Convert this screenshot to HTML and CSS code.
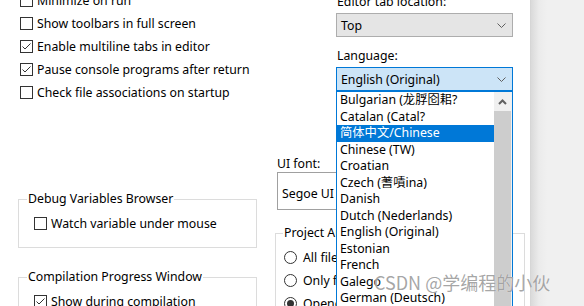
FILE: index.html
```html
<!DOCTYPE html>
<html lang="en">
<head>
    <meta charset="UTF-8">
    <title>Environment Options</title>
    <link rel="stylesheet" href="styles.css">
</head>
<body>
    <div class="screen">
        <div class="dialog">
            <div class="col-left">
                <div class="check-list">
                    <div class="check"><span class="box"></span>Minimize on run</div>
                    <div class="check"><span class="box"></span>Show toolbars in full screen</div>
                    <div class="check"><span class="box checked"></span>Enable multiline tabs in editor</div>
                    <div class="check"><span class="box checked"></span>Pause console programs after return</div>
                    <div class="check"><span class="box"></span>Check file associations on startup</div>
                </div>

                <fieldset class="group group-debug">
                    <legend>Debug Variables Browser</legend>
                    <div class="check"><span class="box"></span>Watch variable under mouse</div>
                </fieldset>

                <fieldset class="group group-compile">
                    <legend>Compilation Progress Window</legend>
                    <div class="check"><span class="box checked"></span>Show during compilation</div>
                </fieldset>
            </div>

            <div class="col-right">
                <div class="combo-block">
                    <div class="field-label">Editor tab location:</div>
                    <div class="combo">
                        <span>Top</span>
                        <svg class="chevron" width="9" height="5" viewBox="0 0 9 5"><polyline points="0.5,0.5 4.5,4.5 8.5,0.5" fill="none" stroke="#5f5f5f" stroke-width="1"/></svg>
                    </div>
                    <div class="field-label label-lang">Language:</div>
                    <div class="combo combo-open">
                        <span>English (Original)</span>
                        <svg class="chevron" width="9" height="5" viewBox="0 0 9 5"><polyline points="0.5,0.5 4.5,4.5 8.5,0.5" fill="none" stroke="#5f5f5f" stroke-width="1"/></svg>

                        <div class="droplist">
                            <ul class="items">
                                <li>Bulgarian (龙脬囵耜?</li>
                                <li>Catalan (Catal?</li>
                                <li class="selected">简体中文/Chinese</li>
                                <li>Chinese (TW)</li>
                                <li>Croatian</li>
                                <li>Czech (蓍嘖ina)</li>
                                <li>Danish</li>
                                <li>Dutch (Nederlands)</li>
                                <li>English (Original)</li>
                                <li>Estonian</li>
                                <li>French</li>
                                <li>Galego</li>
                                <li>German (Deutsch)</li>
                            </ul>
                            <div class="scrollbar">
                                <div class="scroll-up">
                                    <svg width="9" height="6" viewBox="0 0 9 6"><polyline points="1,5 4.5,1.5 8,5" fill="none" stroke="#606060" stroke-width="2"/></svg>
                                </div>
                                <div class="scroll-thumb"></div>
                            </div>
                        </div>
                    </div>
                </div>

                <div class="field-label label-font">UI font:</div>
                <div class="font-box">Segoe UI</div>

                <fieldset class="group group-project">
                    <legend>Project Auto Open</legend>
                    <div class="radio"><span class="dot"></span>All files</div>
                    <div class="radio"><span class="dot"></span>Only first</div>
                    <div class="radio"><span class="dot on"></span>Opened files</div>
                </fieldset>
            </div>
        </div>
        <div class="backdrop"></div>

        <div class="watermark">CSDN @学编程的小伙</div>
    </div>
</body>
</html>
```

FILE: styles.css
```css
body {
    margin: 0;
    padding: 0;
    background-color: #f0f0f0;
    font-family: "Noto Sans", "Noto Sans CJK SC", sans-serif;
    font-size: 12.3px;
    color: #000;
}
.screen {
    position: relative;
    display: flex;
    width: 584px;
    height: 306px;
    overflow: hidden;
}
.dialog {
    display: flex;
    width: 530px;
    height: 306px;
    background: white;
    border-right: 1px solid #d6d6d6;
    flex-shrink: 0;
}
.backdrop {
    flex: 1;
    background: linear-gradient(to right, #dadada, #ebebeb 8px, #f0f0f0 16px);
}

/* left column */
.col-left {
    width: 256px;
    padding-left: 18px;
    flex-shrink: 0;
}
.check-list {
    margin-top: -11px;
    padding-left: 2px;
}
.check,
.radio {
    display: flex;
    align-items: center;
    height: 23px;
    line-height: 16px;
    white-space: nowrap;
}
.box {
    width: 13px;
    height: 13px;
    box-sizing: border-box;
    border: 1px solid #333;
    background: white;
    margin-right: 4px;
    flex-shrink: 0;
}
.box.checked {
    background: white url("data:image/svg+xml;utf8,<svg xmlns='http://www.w3.org/2000/svg' width='11' height='11' viewBox='0 0 11 11'><polyline points='1.5,5.5 4,8 9.5,2.5' fill='none' stroke='%23333' stroke-width='1'/></svg>") no-repeat center;
}

.group {
    margin: 0;
    padding: 5px 0 12px 0;
    border: 1px solid #dcdcdc;
    min-width: 0;
    box-sizing: border-box;
}
.group legend {
    padding: 0 1px;
    margin-left: 8px;
    line-height: 16px;
}
.group .check {
    margin-left: 15px;
}
.group-debug {
    width: 239px;
    margin-top: 87px;
}
.group-compile {
    width: 239px;
    margin-top: 21px;
}

/* right column */
.col-right {
    flex: 1;
    position: relative;
}
.combo-block {
    margin-top: -6px;
    padding-left: 62px;
}
.field-label {
    line-height: 16px;
    padding-left: 1px;
    margin-bottom: 3px;
}
.label-lang {
    margin-top: 11px;
}
.combo {
    position: relative;
    display: flex;
    align-items: center;
    justify-content: space-between;
    width: 177px;
    height: 24px;
    box-sizing: border-box;
    padding: 0 5px 0 4px;
    background: #e5e5e5;
    border: 1px solid #adadad;
}
.combo-open {
    background: #cce4f7;
    border-color: #0078d7;
}
.chevron {
    margin-right: 1px;
}

.droplist {
    position: absolute;
    top: 23px;
    left: -1px;
    z-index: 2;
    display: flex;
    width: 177px;
    height: 240px;
    box-sizing: border-box;
    background: white;
    border: 1px solid #0078d7;
}
.items {
    list-style: none;
    margin: 0;
    padding: 0;
    flex: 1;
}
.items li {
    height: 16.5px;
    line-height: 16.5px;
    padding-left: 3px;
    white-space: nowrap;
    overflow: hidden;
}
.items li.selected {
    background: #0078d7;
    color: white;
}
.scrollbar {
    width: 17px;
    background: #f0f0f0;
    padding-right: 1px;
}
.scroll-up {
    height: 19px;
    display: flex;
    align-items: center;
    justify-content: center;
}
.scroll-thumb {
    height: 220px;
    background: #cdcdcd;
}

.label-font {
    margin-top: 65px;
    margin-bottom: 0;
    padding-left: 3px;
}
.font-box {
    width: 140px;
    height: 38px;
    box-sizing: border-box;
    margin-left: 3px;
    padding: 13px 0 0 4px;
    line-height: 16px;
    border: 1px solid #a0a0a0;
    border-right: none;
}
.group-project {
    width: 250px;
    margin-top: 15px;
    margin-left: 1px;
}
.group-project legend {
    margin-left: 7px;
}
.group-project .radio {
    margin-left: 8px;
}
.dot {
    width: 13px;
    height: 13px;
    box-sizing: border-box;
    border: 1px solid #333;
    border-radius: 50%;
    margin-right: 6px;
    flex-shrink: 0;
    display: flex;
    align-items: center;
    justify-content: center;
}
.dot.on::after {
    content: "";
    width: 7px;
    height: 7px;
    border-radius: 50%;
    background: #333;
}

.watermark {
    position: absolute;
    left: 374px;
    top: 271px;
    z-index: 5;
    font-family: "Noto Sans CJK SC", sans-serif;
    font-size: 18px;
    line-height: 22px;
    color: rgba(150, 150, 150, 0.85);
    text-shadow: 0 0 1px rgba(255, 255, 255, 0.8);
    white-space: nowrap;
}
```
